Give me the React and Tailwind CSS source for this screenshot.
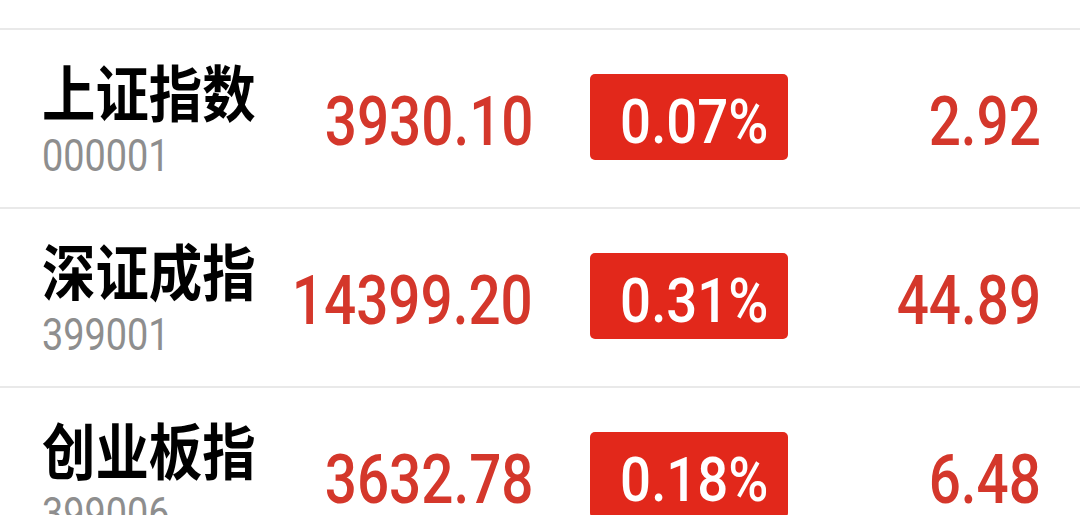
import React from "react";

const rows = [
  { name: "上证指数", code: "000001", price: "3930.10", pct: "0.07%", chg: "2.92" },
  { name: "深证成指", code: "399001", price: "14399.20", pct: "0.31%", chg: "44.89" },
  { name: "创业板指", code: "399006", price: "3632.78", pct: "0.18%", chg: "6.48" },
];

export default function App() {
  return (
    <div className="w-[1080px] h-[515px] overflow-hidden bg-white">
      <div className="h-[30px] border-b-2 border-[#e9e9e9]" />
      {rows.map((r) => (
        <div key={r.code} className="h-[179px] flex items-center pl-[42px] pr-[39px] border-b-2 border-[#e9e9e9]">
          <div className="w-[240px] flex flex-col mt-[2px]">
            <div className="h-[60px]">
              <span className="inline-block origin-left scale-x-[0.875] whitespace-nowrap text-[61px] font-bold leading-[60px] text-black font-['Noto_Sans_CJK_SC',sans-serif]">{r.name}</span>
            </div>
            <div className="mt-[13px] h-[44px]">
              <span className="inline-block origin-left scale-x-[0.86] text-[44px] leading-[44px] text-[#8e8e8e] font-['Roboto',sans-serif] font-normal">{r.code}</span>
            </div>
          </div>
          <div className="w-[251px] flex justify-end mt-[6px]">
            <span className="inline-block origin-right scale-x-[0.82] whitespace-nowrap text-[69px] leading-none text-[#d4372b] font-['Roboto',sans-serif] font-medium">{r.price}</span>
          </div>
          <div className="ml-[57px] w-[198px] h-[86px] -mt-[3px] rounded-[5px] bg-[#e2281b] flex items-center justify-center">
            <span className="mt-[10px] ml-[10px] inline-block scale-x-[0.88] whitespace-nowrap text-white text-[62px] leading-none font-['Roboto',sans-serif] font-medium">{r.pct}</span>
          </div>
          <div className="flex-1 flex justify-end mt-[6px]">
            <span className="inline-block origin-right scale-x-[0.82] whitespace-nowrap text-[69px] leading-none text-[#d4372b] font-['Roboto',sans-serif] font-medium">{r.chg}</span>
          </div>
        </div>
      ))}
    </div>
  );
}
